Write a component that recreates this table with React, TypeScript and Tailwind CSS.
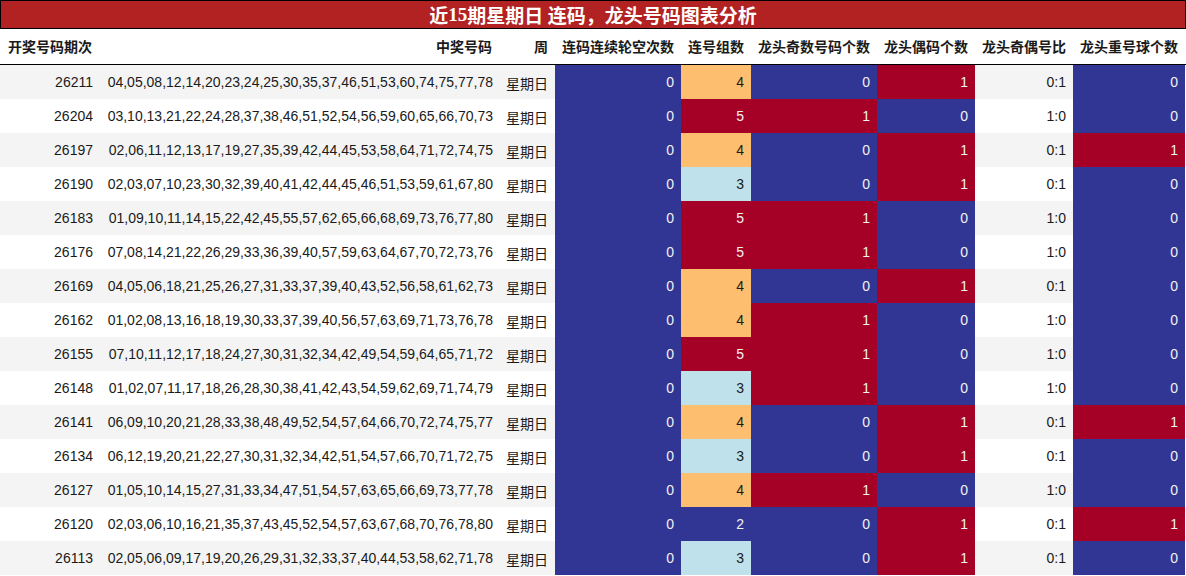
const rows: [string, string, number, number, number, number, string, number][] = [
  ['26211', '04,05,08,12,14,20,23,24,25,30,35,37,46,51,53,60,74,75,77,78', 0, 4, 0, 1, '0:1', 0],
  ['26204', '03,10,13,21,22,24,28,37,38,46,51,52,54,56,59,60,65,66,70,73', 0, 5, 1, 0, '1:0', 0],
  ['26197', '02,06,11,12,13,17,19,27,35,39,42,44,45,53,58,64,71,72,74,75', 0, 4, 0, 1, '0:1', 1],
  ['26190', '02,03,07,10,23,30,32,39,40,41,42,44,45,46,51,53,59,61,67,80', 0, 3, 0, 1, '0:1', 0],
  ['26183', '01,09,10,11,14,15,22,42,45,55,57,62,65,66,68,69,73,76,77,80', 0, 5, 1, 0, '1:0', 0],
  ['26176', '07,08,14,21,22,26,29,33,36,39,40,57,59,63,64,67,70,72,73,76', 0, 5, 1, 0, '1:0', 0],
  ['26169', '04,05,06,18,21,25,26,27,31,33,37,39,40,43,52,56,58,61,62,73', 0, 4, 0, 1, '0:1', 0],
  ['26162', '01,02,08,13,16,18,19,30,33,37,39,40,56,57,63,69,71,73,76,78', 0, 4, 1, 0, '1:0', 0],
  ['26155', '07,10,11,12,17,18,24,27,30,31,32,34,42,49,54,59,64,65,71,72', 0, 5, 1, 0, '1:0', 0],
  ['26148', '01,02,07,11,17,18,26,28,30,38,41,42,43,54,59,62,69,71,74,79', 0, 3, 1, 0, '1:0', 0],
  ['26141', '06,09,10,20,21,28,33,38,48,49,52,54,57,64,66,70,72,74,75,77', 0, 4, 0, 1, '0:1', 1],
  ['26134', '06,12,19,20,21,22,27,30,31,32,34,42,51,54,57,66,70,71,72,75', 0, 3, 0, 1, '0:1', 0],
  ['26127', '01,05,10,14,15,27,31,33,34,47,51,54,57,63,65,66,69,73,77,78', 0, 4, 1, 0, '1:0', 0],
  ['26120', '02,03,06,10,16,21,35,37,43,45,52,54,57,63,67,68,70,76,78,80', 0, 2, 0, 1, '0:1', 1],
  ['26113', '02,05,06,09,17,19,20,26,29,31,32,33,37,40,44,53,58,62,71,78', 0, 3, 0, 1, '0:1', 0],
];

const grid = 'grid grid-cols-[100px_399px_56px_126px_70px_126px_98px_98px_112px]';

// 0/1 columns: blue for 0, red for 1
const binCls = (v: number) => (v === 1 ? 'bg-[#a50026] text-[#f2f2f2]' : 'bg-[#313695] text-[#f2f2f2]');

const groupCls = (v: number) => {
  if (v >= 5) return 'bg-[#a50026] text-[#f2f2f2]';
  if (v === 4) return 'bg-[#fdbf6f] text-[#1a1a1a]';
  if (v === 3) return 'bg-[#bfe1ec] text-[#1a1a1a]';
  return 'bg-[#313695] text-[#f2f2f2]';
};

const headers = ['中奖号码', '周', '连码连续轮空次数', '连号组数', '龙头奇数号码个数', '龙头偶码个数', '龙头奇偶号比', '龙头重号球个数'];

export default function App() {
  return (
    <div className="w-[1186px] h-[576px] bg-white font-['Liberation_Sans','Noto_Sans_CJK_SC',sans-serif] text-[14px] text-[#1a1a1a] overflow-hidden">
      {/* 标题 */}
      <div className="w-[1186px] h-[29px] bg-[#b22222] border border-black flex items-center justify-center text-white font-bold text-[19px] font-['Noto_Sans_CJK_SC',sans-serif] leading-none">
        近<span className="font-['Liberation_Serif',serif]">15</span>期星期日 连码，龙头号码图表分析
      </div>

      {/* 表头 */}
      <div className={`${grid} h-[36px] border-b border-black font-bold font-['Noto_Sans_CJK_SC',sans-serif]`}>
        <div className="flex items-center pl-2">开奖号码期次</div>
        {headers.map((h) => (
          <div key={h} className="flex items-center justify-end pr-[7px]">{h}</div>
        ))}
      </div>

      {/* 数据行 */}
      {rows.map((r, i) => {
        const stripe = i % 2 === 0 ? 'bg-[#f4f4f4]' : 'bg-white';
        return (
          <div key={r[0]} className={`${grid} h-[34px]`}>
            <div className={`${stripe} flex items-center justify-end pr-[7px]`}>{r[0]}</div>
            <div className={`${stripe} flex items-center justify-end pr-[6px]`}>{r[1]}</div>
            <div className={`${stripe} flex items-center justify-end pr-[7px] pt-[3px] font-['Noto_Sans_CJK_SC',sans-serif]`}>星期日</div>
            <div className={`${binCls(r[2])} flex items-center justify-end pr-[7px]`}>{r[2]}</div>
            <div className={`${groupCls(r[3])} flex items-center justify-end pr-[7px]`}>{r[3]}</div>
            <div className={`${binCls(r[4])} flex items-center justify-end pr-[7px]`}>{r[4]}</div>
            <div className={`${binCls(r[5])} flex items-center justify-end pr-[7px]`}>{r[5]}</div>
            <div className={`${stripe} flex items-center justify-end pr-[7px]`}>{r[6]}</div>
            <div className={`${binCls(r[7])} flex items-center justify-end pr-[7px]`}>{r[7]}</div>
          </div>
        );
      })}
    </div>
  );
}
